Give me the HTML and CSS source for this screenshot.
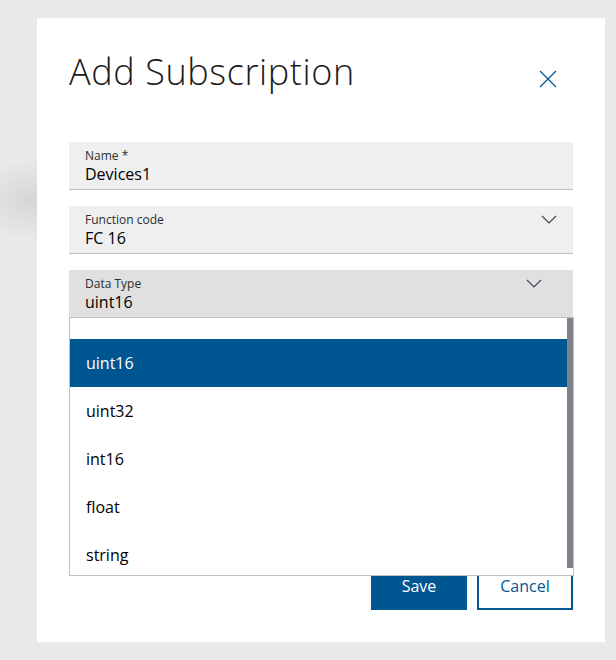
FILE: index.html
```html
<!DOCTYPE html>
<html lang="en">

<head>
    <meta charset="UTF-8">
    <meta name="viewport" content="width=device-width, initial-scale=1.0">
    <title>Add Subscription</title>
    <link rel="stylesheet" href="styles.css">
</head>

<body>
    <div class="dialogo">
        <div class="cabecera">
            <h1>Add Subscription</h1>
            <button class="cerrar" type="button" aria-label="Close">
                <svg width="18" height="18" viewBox="0 0 18 18">
                    <path d="M1 1 L17 17 M17 1 L1 17" stroke="#005691" stroke-width="1.2" fill="none" />
                </svg>
            </button>
        </div>

        <div class="campos">
            <div class="campo">
                <label>Name *</label>
                <div class="valor">Devices1</div>
            </div>
            <div class="campo">
                <label>Function code</label>
                <div class="valor">FC 16</div>
                <svg class="flecha" width="16" height="10" viewBox="0 0 16 10">
                    <path d="M1 1 L8 8 L15 1" stroke="#3f4a54" stroke-width="1.2" fill="none" />
                </svg>
            </div>
            <div class="campo campo_abierto">
                <label>Data Type</label>
                <div class="valor">uint16</div>
                <svg class="flecha" width="16" height="10" viewBox="0 0 16 10">
                    <path d="M1 1 L8 8 L15 1" stroke="#3f4a54" stroke-width="1.2" fill="none" />
                </svg>
                <ul class="lista">
                    <li class="vacio"></li>
                    <li class="activo">uint16</li>
                    <li>uint32</li>
                    <li>int16</li>
                    <li>float</li>
                    <li>string</li>
                </ul>
            </div>
        </div>

        <div class="botones">
            <button class="btn_primario" type="button">Save</button>
            <button class="btn_secundario" type="button">Cancel</button>
        </div>
    </div>
</body>

</html>
```

FILE: styles.css
```css
* {
    padding: 0;
    margin: 0;
    box-sizing: border-box;
}

body {
    width: 616px;
    height: 660px;
    overflow: hidden;
    font-family: "Open Sans", "Noto Sans", sans-serif;
    color: #000;
    background:
        radial-gradient(ellipse 60px 40px at 30px 200px, #d6d6d6, rgba(233, 233, 233, 0)),
        #e9e9e9;
}

.dialogo {
    width: 568px;
    height: 624px;
    margin-left: 37px;
    margin-top: 18px;
    background: #fff;
    padding: 32px 32px 32px 32px;
    display: flex;
    flex-direction: column;
}

.cabecera {
    display: flex;
    justify-content: space-between;
    align-items: flex-start;
    height: 92px;
}

.cabecera h1 {
    font-family: "Open Sans", sans-serif;
    font-weight: 300;
    font-size: 36px;
    line-height: 44px;
    color: #1a1a1a;
    letter-spacing: 0.6px;
}

.cerrar {
    border: none;
    background: none;
    margin-top: 20px;
    margin-right: 16px;
    width: 18px;
    height: 18px;
}

.campos {
    display: flex;
    flex-direction: column;
    gap: 16px;
}

.campo {
    position: relative;
    height: 48px;
    background: #efefef;
    border-bottom: 1px solid #bfc0c2;
    padding: 6px 16px 0 16px;
}

.campo label {
    display: block;
    font-size: 12px;
    line-height: 16px;
    color: #2e2e2e;
}

.campo .valor {
    font-size: 16px;
    line-height: 21px;
    color: #000;
}

.flecha {
    position: absolute;
    top: 9px;
    right: 16px;
}

.campo_abierto {
    background: #e0e0e0;
}

.campo_abierto .flecha {
    right: 31px;
}

.lista {
    position: absolute;
    left: 0;
    top: 47px;
    width: 505px;
    height: 259px;
    list-style: none;
    background: #fff;
    border: 1px solid #bfc0c2;
    z-index: 2;
    overflow: hidden;
}

.lista::after {
    content: '';
    position: absolute;
    top: 0;
    right: 0;
    width: 6px;
    height: 250px;
    background: #7d8389;
}

.lista li {
    height: 48px;
    padding: 0 16px;
    font-size: 16px;
    line-height: 48px;
    color: #000;
}

.lista li.vacio {
    height: 21px;
}

.lista li.activo {
    background: #005691;
    color: #fff;
}

.botones {
    margin-top: auto;
    display: flex;
    justify-content: flex-end;
    gap: 10px;
}

.botones button {
    width: 96px;
    height: 48px;
    font-family: "Open Sans", "Noto Sans", sans-serif;
    font-size: 16px;
}

.btn_primario {
    background: #005691;
    border: none;
    color: #fff;
}

.btn_secundario {
    background: #fff;
    border: 2px solid #005691;
    color: #005691;
}
```
